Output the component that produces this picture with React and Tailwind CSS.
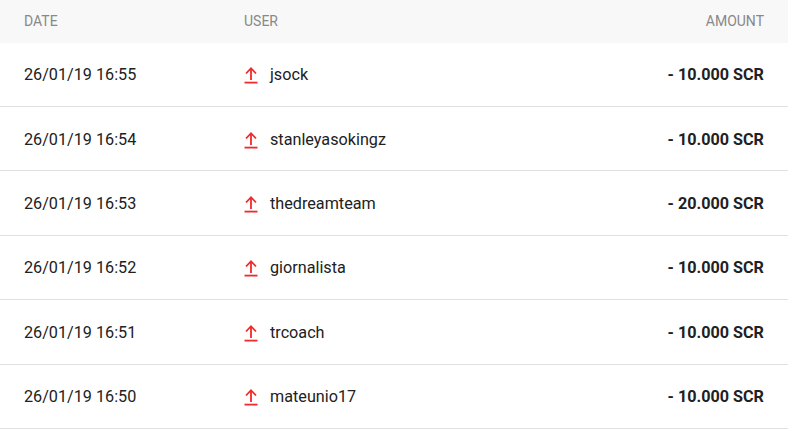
const rows = [
  { date: "26/01/19 16:55", user: "jsock", amount: "- 10.000 SCR" },
  { date: "26/01/19 16:54", user: "stanleyasokingz", amount: "- 10.000 SCR" },
  { date: "26/01/19 16:53", user: "thedreamteam", amount: "- 20.000 SCR" },
  { date: "26/01/19 16:52", user: "giornalista", amount: "- 10.000 SCR" },
  { date: "26/01/19 16:51", user: "trcoach", amount: "- 10.000 SCR" },
  { date: "26/01/19 16:50", user: "mateunio17", amount: "- 10.000 SCR" },
];

function UpIcon() {
  return (
    <svg width="14" height="18" viewBox="0 0 14 18" className="shrink-0">
      <path d="M7 14V2.5M2 7.5L7 2.2l5 5.3" fill="none" stroke="#ef2b2b" strokeWidth="1.8" />
      <path d="M0.5 16.6h13" stroke="#ef2b2b" strokeWidth="1.8" />
    </svg>
  );
}

export default function App() {
  return (
    <div className="w-[788px] bg-white font-['Roboto',sans-serif] text-[#212121]">
      <div className="h-[42.6px] bg-[#f8f8f8] flex items-center px-6 text-[14px] text-[#888] uppercase">
        <div className="w-[220px]">Date</div>
        <div className="flex-1">User</div>
        <div>Amount</div>
      </div>
      {rows.map((r) => (
        <div key={r.date} className="h-[64.4px] pt-[2px] border-b border-[#e0e0e0] flex items-center px-6 text-[16.2px]">
          <div className="w-[220px]">{r.date}</div>
          <div className="flex-1 flex items-center gap-[12px]">
            <UpIcon />
            <span>{r.user}</span>
          </div>
          <div className="font-bold">{r.amount}</div>
        </div>
      ))}
    </div>
  );
}
